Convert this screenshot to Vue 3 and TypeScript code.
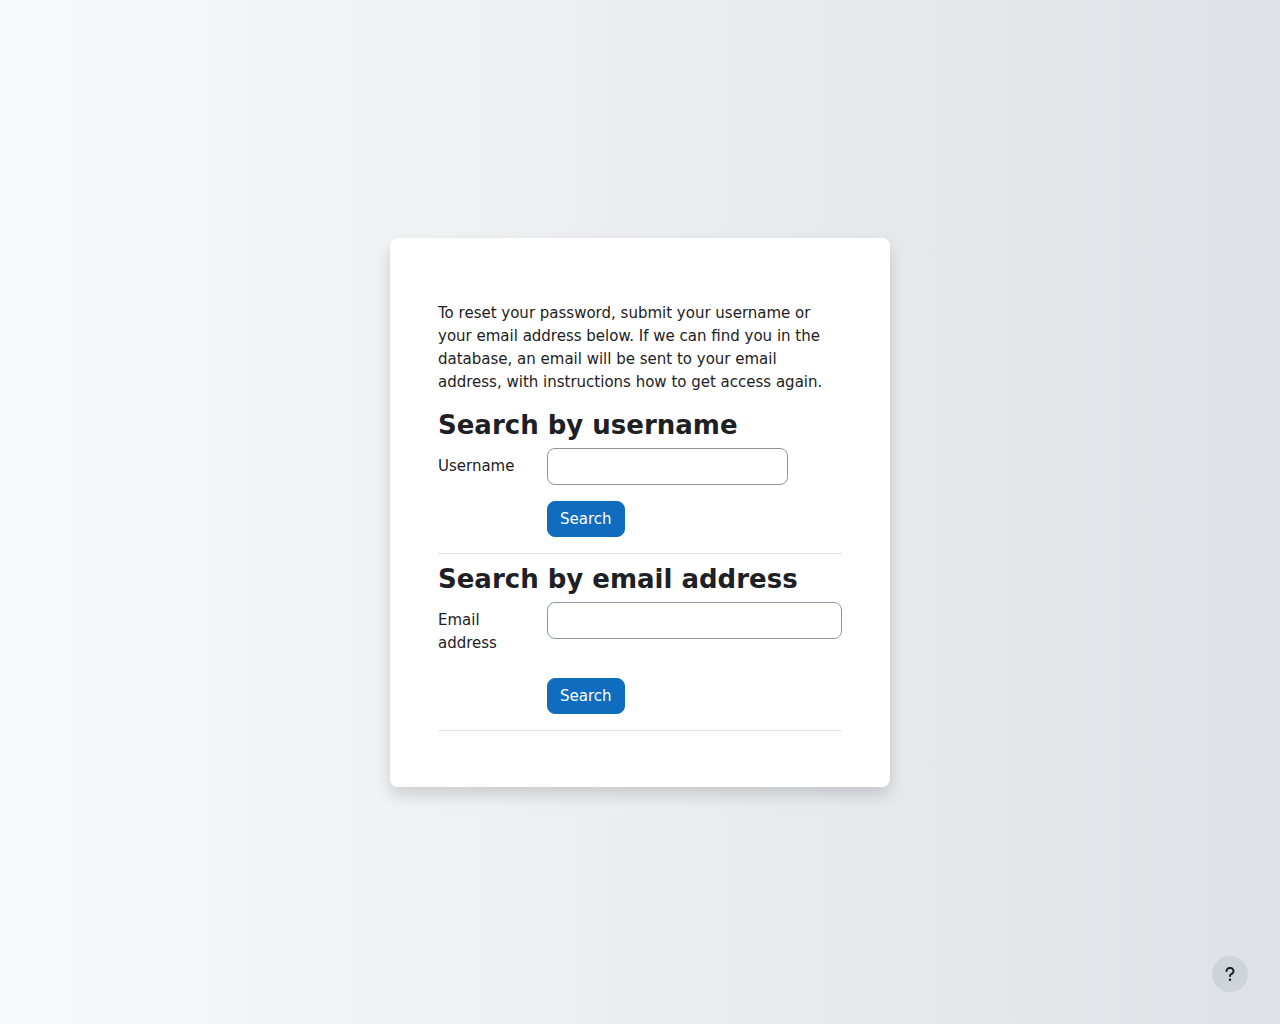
<script setup lang="ts">
import { ref } from 'vue'

const username = ref('')
const email = ref('')
</script>

<template>
  <div class="page">
    <main class="card">
      <p class="intro">
        To reset your password, submit your username or your email address below. If we can find you in the database, an email will be sent to your email address, with instructions how to get access again.
      </p>

      <form class="group" @submit.prevent>
        <h3>Search by username</h3>
        <div class="row">
          <label for="username">Username</label>
          <div class="field">
            <input id="username" v-model="username" class="short" type="text" autocomplete="username" />
          </div>
        </div>
        <div class="row">
          <div class="field offset"><button class="primary" type="submit">Search</button></div>
        </div>
      </form>

      <form class="group" @submit.prevent>
        <h3>Search by email address</h3>
        <div class="row">
          <label for="email">Email address</label>
          <div class="field">
            <input id="email" v-model="email" type="email" autocomplete="email" />
          </div>
        </div>
        <div class="row">
          <div class="field offset"><button class="primary" type="submit">Search</button></div>
        </div>
      </form>
    </main>

    <button class="help" type="button" aria-label="Show footer">
      <svg viewBox="0 0 320 512" aria-hidden="true">
        <path d="M80 160c0-35.300 28.700-64 64-64h32c35.300 0 64 28.700 64 64v3.600c0 21.800-11.100 42.100-29.400 53.800l-42.200 27.100c-25.200 16.200-40.400 44.100-40.400 74V320c0 17.700 14.300 32 32 32s32-14.300 32-32v-1.400c0-8.200 4.200-15.800 11-20.200l42.200-27.100c36.600-23.600 58.800-64.100 58.800-107.700V160c0-70.700-57.300-128-128-128H144C73.300 32 16 89.300 16 160c0 17.700 14.300 32 32 32s32-14.300 32-32zm80 320a40 40 0 1 0 0-80 40 40 0 1 0 0 80z" />
      </svg>
    </button>
  </div>
</template>

<style>
body {
  margin: 0;
}
</style>

<style scoped>
.page,
.page * {
  box-sizing: border-box;
}

.page {
  display: flex;
  align-items: center;
  justify-content: center;
  min-height: 100vh;
  background: linear-gradient(to right, #f8f9fa 0%, #dee2e6 100%);
  color: #1d2125;
  font: 15px/23px "DejaVu Sans", sans-serif;
}

.card {
  width: 100%;
  max-width: 500px;
  padding: 64px 48px 56px;
  border-radius: 8px;
  background: #fff;
  box-shadow: 0 8px 16px rgba(0, 0, 0, 0.15);
}

.intro {
  margin: 0 0 16px;
}

h3 {
  margin: 0 0 8px;
  font-size: 26px;
  line-height: 30px;
  font-weight: 700;
}

.group {
  margin-bottom: 10px;
  border-bottom: 1px solid #dee2e6;
}

.group:last-child {
  margin-bottom: 0;
}

.row {
  display: flex;
  margin-bottom: 16px;
}

label {
  width: 27%;
  padding: 7px 24px 7px 0;
}

.field {
  flex: 1;
}

.offset {
  margin-left: 27%;
}

input {
  display: block;
  width: 100%;
  height: 37px;
  padding: 6px 12px;
  border: 1px solid #8f959e;
  border-radius: 8px;
  background: #fff;
  color: #495057;
  font: inherit;
}

.short {
  width: 241px;
}

.primary {
  display: block;
  padding: 6px 12px 5px;
  border: 1px solid #0f6cbf;
  border-radius: 8px;
  background: #0f6cbf;
  color: #fff;
  font: inherit;
  cursor: pointer;
}

.help {
  position: fixed;
  right: 32px;
  bottom: 32px;
  display: flex;
  align-items: center;
  justify-content: center;
  width: 36px;
  height: 36px;
  padding: 0;
  border: 0;
  border-radius: 50%;
  background: #ced4da;
  color: #1d2125;
  cursor: pointer;
}

.help svg {
  width: 10px;
  height: 16px;
  fill: currentColor;
}
</style>
